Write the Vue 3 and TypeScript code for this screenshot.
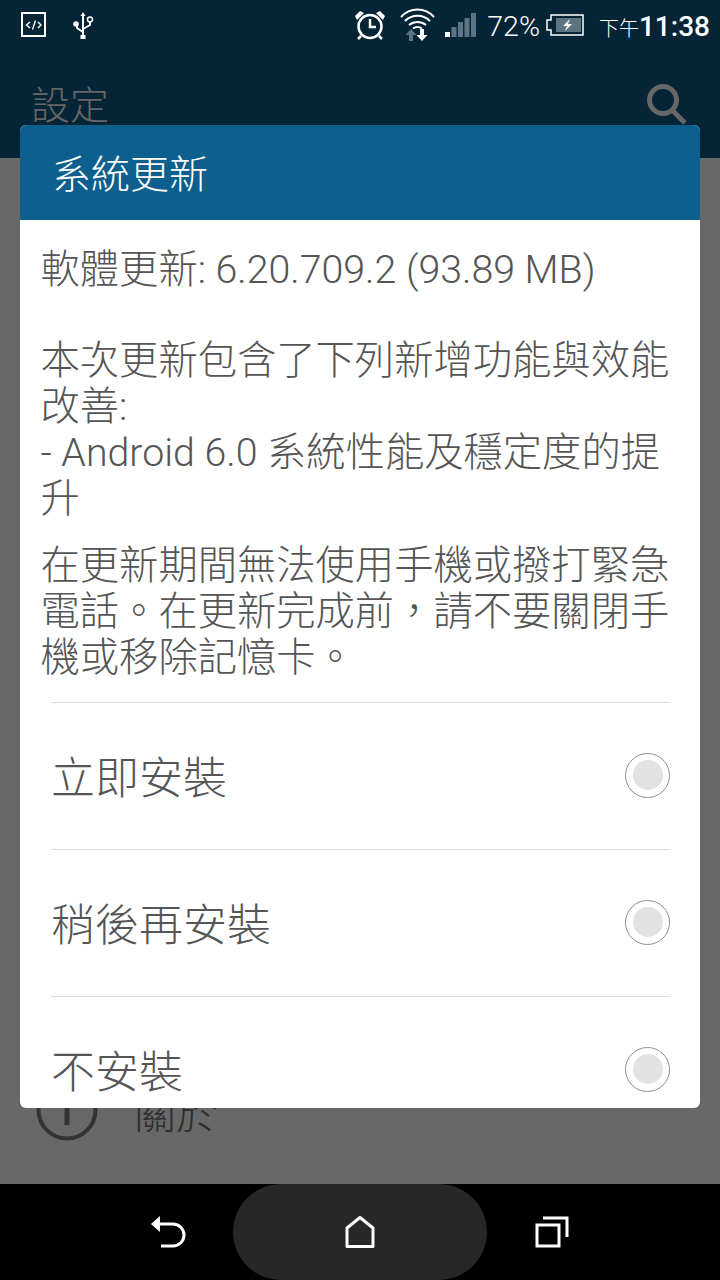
<template>
  <div class="screen">
    <header class="top">
      <div class="status">
        <div class="status-left">
          <svg class="ic" width="26" height="26" viewBox="0 0 26 26" fill="none" stroke="#fff">
            <rect x="1" y="1" width="23" height="23" stroke-width="2" />
            <path d="M9 10l-3.500 3 3.500 3M17 10l3 3-3 3M14.500 8.500l-3 9" stroke-width="1.400" />
          </svg>
          <svg class="ic" width="22" height="27" viewBox="0 0 22 27" fill="none" stroke="#fff" stroke-width="2">
            <path d="M11 3v22M11 20l-6-4v-3M11 17l7-4V9" />
            <path d="M11 0l2.500 4h-5z" fill="#fff" stroke="none" />
            <circle cx="4" cy="12" r="2.800" fill="#fff" stroke="none" />
            <circle cx="18" cy="7.500" r="2.500" stroke-width="1.500" />
            <rect x="8.500" y="23" width="5" height="4" fill="#fff" stroke="none" />
          </svg>
        </div>
        <div class="status-right">
          <svg width="32" height="32" viewBox="0 0 32 32" fill="none" stroke="#fff" stroke-width="2.500">
            <circle cx="16" cy="17.500" r="11.500" />
            <path d="M16 10v8h6M7 27l-3 3M25 27l3 3" />
            <path d="M1 7l5-5 4 2-7 7zM31 7l-5-5-4 2 7 7z" fill="#fff" stroke="none" />
          </svg>
          <svg class="wifi" width="36" height="34" viewBox="0 0 36 34" fill="none" stroke="#fff" stroke-width="2">
            <path d="M1 9C10-1 25-1 34 9M5 13c7-7 18-7 25 0M9 17c5-4 12-4 17 0M13 20.500c3-2 6-2 9 0" />
            <path d="M11 21l-5.500 6H9v6h4v-6h3.500z" fill="#5d7483" stroke="none" />
            <path d="M20 21v6h-3.500l5.500 6 5.500-6H24v-6z" fill="#fff" stroke="none" />
          </svg>
          <svg class="signal" width="32" height="25" viewBox="0 0 32 25">
            <rect x="0" y="19" width="5" height="5" fill="#fff" />
            <rect x="6.500" y="14" width="5" height="10" fill="#5d7483" />
            <rect x="13" y="9" width="5" height="15" fill="#5d7483" />
            <rect x="19.500" y="5" width="5" height="19" fill="#5d7483" />
            <rect x="26" y="0" width="5" height="24" fill="#5d7483" />
          </svg>
          <span class="pct">72%</span>
          <svg class="batt" width="38" height="22" viewBox="0 0 38 22" fill="none">
            <path d="M5 1h32v20H5v-5H1V6h4z" stroke="#fff" stroke-width="1.500" />
            <rect x="10" y="4" width="25" height="14" fill="#5d7483" />
            <path d="M24 5l-7 7h4l-2 5 7-7h-4z" fill="#fff" />
          </svg>
          <span class="clock"><small>下午</small>11:38</span>
        </div>
      </div>
      <div class="bar">
        <span class="bar-title">設定</span>
        <svg width="42" height="42" viewBox="0 0 42 42" fill="none" stroke="#666" stroke-width="5">
          <circle cx="17" cy="17" r="13.500" />
          <path d="M26 27l13 13" />
        </svg>
      </div>
    </header>

    <main class="behind">
      <div class="about">
        <svg width="62" height="62" viewBox="0 0 62 62" fill="none" stroke="#333" stroke-width="4">
          <circle cx="31" cy="31" r="28.500" />
          <path d="M31 24v22" stroke-width="5" />
        </svg>
        <span>關於</span>
      </div>
    </main>

    <nav class="nav">
      <div class="nav-pill">
        <svg width="36" height="34" viewBox="0 0 36 34" fill="none" stroke="#fff" stroke-width="3">
          <path d="M7 9h15a9.500 9.500 0 0 1 0 22H10" />
          <path d="M9 1v16L0 9z" fill="#fff" stroke="none" />
        </svg>
        <svg width="32" height="32" viewBox="0 0 32 32" fill="none" stroke="#fff" stroke-width="3" stroke-linejoin="round">
          <path d="M3 12L16 1.500 29 12v18.500H3z" />
        </svg>
        <svg width="34" height="32" viewBox="0 0 34 32" fill="none" stroke="#fff" stroke-width="3">
          <rect x="2" y="9" width="22" height="21" />
          <path d="M8 2h24v19" />
        </svg>
      </div>
    </nav>

    <section class="dialog">
      <h1 class="dialog-title">系統更新</h1>
      <div class="dialog-body">
        <p class="spaced">軟體更新: 6.20.709.2 (93.89 MB)</p>
        <p>本次更新包含了下列新增功能與效能改善:</p>
        <p>- Android 6.0 系統性能及穩定度的提升</p>
        <p class="warning">在更新期間無法使用手機或撥打緊急電話。在更新完成前&#xFF0C;請不要關閉手機或移除記憶卡。</p>
      </div>
      <ul class="options">
        <li v-for="opt in options" :key="opt" class="option">
          <span>{{ opt }}</span>
          <i class="radio"></i>
        </li>
      </ul>
    </section>
  </div>
</template>

<script setup lang="ts">
const options: string[] = ['立即安裝', '稍後再安裝', '不安裝'];
</script>

<style>
body {
  margin: 0;
}
</style>

<style scoped>
.screen {
  position: relative;
  width: 720px;
  height: 1280px;
  display: flex;
  flex-direction: column;
  overflow: hidden;
  font-family: Roboto, "Noto Sans CJK TC", sans-serif;
}

.top {
  height: 158px;
  background: #052537;
  flex: none;
}

.status {
  height: 50px;
  display: flex;
  justify-content: space-between;
  align-items: center;
  padding: 0 10px 0 21px;
  color: #fff;
}

.status-left {
  display: flex;
  align-items: center;
  gap: 25px;
}

.status-right {
  display: flex;
  align-items: center;
}

.wifi {
  margin-left: 14px;
}

.signal {
  margin: 0 0 0 9px;
}

.pct {
  font-size: 28.500px;
  margin-left: 10px;
  font-weight: 300;
  position: relative;
  top: 1px;
}

.batt {
  margin-left: 6px;
}

.clock {
  font-size: 28px;
  font-weight: 500;
  margin-left: 15px;
  position: relative;
  top: 1px;
}

.clock small {
  font-size: 20px;
  font-weight: 300;
}

.bar {
  display: flex;
  justify-content: space-between;
  align-items: flex-start;
  padding: 33px 32px 0 31px;
}

.bar-title {
  font-size: 39px;
  line-height: 46px;
  font-weight: 300;
  color: #666;
}

.behind {
  flex: 1;
  background: #686868;
  display: flex;
  flex-direction: column;
  justify-content: flex-end;
}

.about {
  display: flex;
  align-items: center;
  gap: 36px;
  padding: 0 36px 43px;
  font-size: 42px;
  font-weight: 300;
  color: #2e2e2e;
}

.nav {
  height: 96px;
  background: #000;
  flex: none;
  display: flex;
  justify-content: center;
}

.nav-pill {
  width: 254px;
  background: #272727;
  border-radius: 48px / 48px;
  display: flex;
  justify-content: center;
  align-items: center;
  gap: 0;
  position: relative;
}

.nav-pill svg:first-child {
  position: absolute;
  left: -82px;
}

.nav-pill svg:last-child {
  position: absolute;
  right: -82px;
}

.dialog {
  position: absolute;
  left: 20px;
  top: 125px;
  width: 680px;
  height: 983px;
  background: #fff;
  border-radius: 6px;
  overflow: hidden;
  color: #555;
}

.dialog-title {
  margin: 0;
  height: 95px;
  background: #0d5f8e;
  color: #fff;
  font-size: 39px;
  font-weight: 300;
  line-height: 101px;
  padding-left: 32px;
}

.dialog-body {
  padding: 27px 18px 0 20.500px;
  font-size: 39.300px;
  font-weight: 300;
  line-height: 46px;
}

.dialog-body p {
  margin: 0;
}

.spaced {
  margin-bottom: 45px !important;
}

.warning {
  margin-top: 21px !important;
}

.options {
  list-style: none;
  margin: 21px 30px 0 31px;
  padding: 0;
}

.option {
  height: 146px;
  border-top: 1px solid #dedede;
  display: flex;
  justify-content: space-between;
  align-items: center;
  font-size: 44px;
  font-weight: 300;
}

.option span {
  padding: 0 0 2px 0;
}

.radio {
  width: 45px;
  height: 45px;
  border: 1.500px solid #8f8f8f;
  border-radius: 50%;
  box-sizing: border-box;
  display: flex;
  align-items: center;
  justify-content: center;
  margin-bottom: 2px;
}

.radio::before {
  content: "";
  width: 30px;
  height: 30px;
  border-radius: 50%;
  background: #e2e2e2;
}
</style>
